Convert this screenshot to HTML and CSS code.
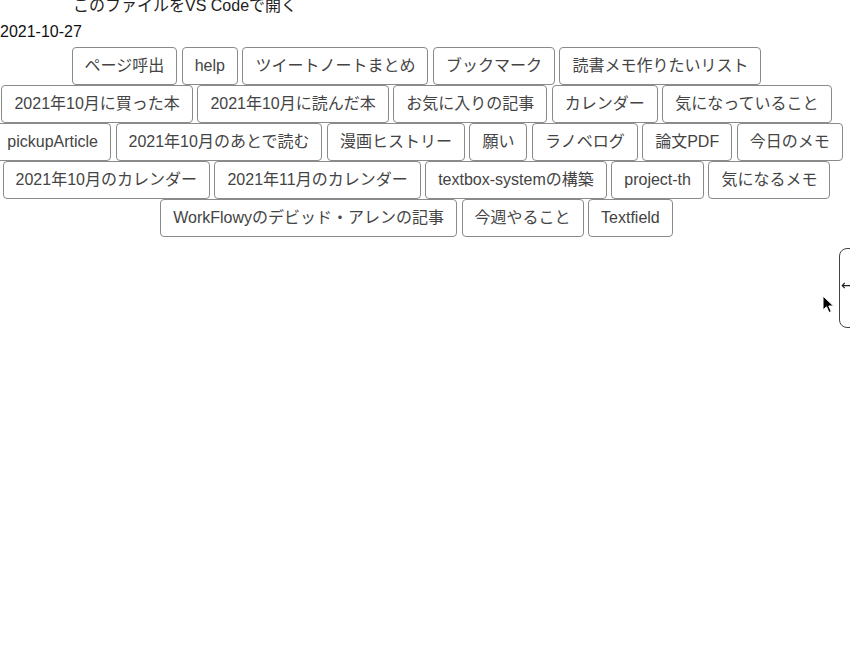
FILE: index.html
```html
<!DOCTYPE html>
<html lang="ja">
<head>
<meta charset="utf-8">
<title>ページ</title>
<link rel="stylesheet" href="styles.css">
</head>
<body>
<div class="page">
  <div class="open-link"><a href="#">このファイルをVS Codeで開く</a></div>
  <div class="date">2021-10-27</div>
  <div class="buttons">
    <div class="row">
      <button class="btn">ページ呼出</button>
      <button class="btn">help</button>
      <button class="btn">ツイートノートまとめ</button>
      <button class="btn">ブックマーク</button>
      <button class="btn">読書メモ作りたいリスト</button>
    </div>
    <div class="row">
      <button class="btn">2021年10月に買った本</button>
      <button class="btn">2021年10月に読んだ本</button>
      <button class="btn">お気に入りの記事</button>
      <button class="btn">カレンダー</button>
      <button class="btn">気になっていること</button>
    </div>
    <div class="row row-wide">
      <button class="btn">pickupArticle</button>
      <button class="btn">2021年10月のあとで読む</button>
      <button class="btn">漫画ヒストリー</button>
      <button class="btn">願い</button>
      <button class="btn">ラノベログ</button>
      <button class="btn">論文PDF</button>
      <button class="btn">今日のメモ</button>
    </div>
    <div class="row">
      <button class="btn">2021年10月のカレンダー</button>
      <button class="btn">2021年11月のカレンダー</button>
      <button class="btn">textbox-systemの構築</button>
      <button class="btn">project-th</button>
      <button class="btn">気になるメモ</button>
    </div>
    <div class="row">
      <button class="btn">WorkFlowyのデビッド・アレンの記事</button>
      <button class="btn">今週やること</button>
      <button class="btn">Textfield</button>
    </div>
  </div>
</div>
<div class="side-toggle"><span class="arrow">←</span></div>
<svg class="cursor" width="14" height="20" viewBox="0 0 14 20"><path d="M1 1 L1 15 L4.5 11.8 L7 17.5 L9.3 16.5 L6.8 11 L11.5 11 Z" fill="#000" stroke="#fff" stroke-width="1"/></svg>
</body>
</html>
```

FILE: styles.css
```css
html, body {
  margin: 0;
  padding: 0;
  background: #fff;
}
body {
  font-family: "Liberation Sans", "Noto Sans CJK JP", sans-serif;
  font-size: 16px;
  line-height: 24px;
  color: #111;
  overflow: hidden;
}
.page {
  width: 833px;
  margin-top: -6px;
}
.open-link {
  padding-left: 73px;
  height: 26px;
}
.open-link a {
  color: #222;
  text-decoration: none;
}
.date {
  height: 24px;
  color: #111;
}
.buttons {
  margin-top: 3px;
  display: flex;
  flex-direction: column;
}
.row {
  display: flex;
  justify-content: center;
  gap: 4.5px;
  white-space: nowrap;
}
.row-wide {
  padding-left: 4px;
}
.btn {
  font-family: "Liberation Sans", "Noto Sans CJK JP", sans-serif;
  font-size: 16px;
  line-height: 24px;
  height: 38px;
  padding: 6px 12px;
  margin: 0;
  background: #fff;
  color: #444;
  border: 1px solid #8a8a8a;
  border-radius: 4px;
  flex: none;
}
.side-toggle {
  position: fixed;
  left: 839px;
  top: 248px;
  width: 40px;
  height: 78px;
  border: 1px solid #444;
  border-radius: 8px;
  display: flex;
  align-items: center;
  background: #fff;
}
.arrow {
  font-family: "DejaVu Sans", sans-serif;
  font-size: 14px;
  line-height: 16px;
  margin-left: 1px;
  margin-top: -6px;
  color: #222;
}
.cursor {
  position: fixed;
  left: 822px;
  top: 295px;
}
```
